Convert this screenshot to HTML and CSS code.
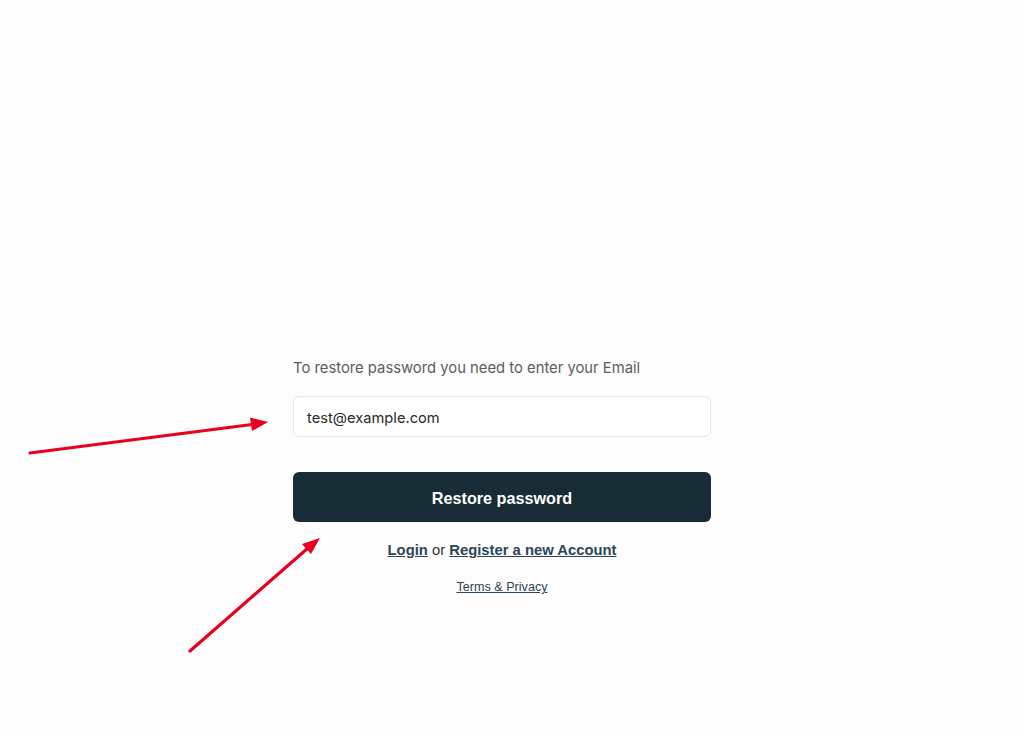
FILE: index.html
```html
<!DOCTYPE html>
<html lang="en">
<head>
<meta charset="utf-8">
<title>Restore password</title>
<link rel="stylesheet" href="styles.css">
</head>
<body>
<div class="page">
  <form class="card">
    <p class="hint">To restore password you need to enter your Email</p>
    <div class="input">test@example.com</div>
    <button type="button" class="btn">Restore password</button>
    <p class="links"><a href="#">Login</a> or <a href="#">Register a new Account</a></p>
    <p class="terms"><a href="#">Terms &amp; Privacy</a></p>
  </form>
</div>
<svg class="arrows" width="1024" height="736" viewBox="0 0 1024 736">
  <line x1="30" y1="453" x2="252" y2="424.5" stroke="#e8001c" stroke-width="3.2" stroke-linecap="round"/>
  <polygon points="268,422 250,417.5 252,431" fill="#e8001c"/>
  <line x1="190" y1="651" x2="308" y2="548" stroke="#e8001c" stroke-width="3.2" stroke-linecap="round"/>
  <polygon points="320,538 302,544 311,554" fill="#e8001c"/>
</svg>
</body>
</html>
```
FILE: styles.css
```css
html, body {
  margin: 0;
  padding: 0;
  background: #fdfdfd;
}
body {
  width: 1024px;
  height: 736px;
  overflow: hidden;
  position: relative;
}
.page {
  display: flex;
  justify-content: center;
  padding-right: 20px;
  padding-top: 358px;
}
.card {
  width: 418px;
  display: flex;
  flex-direction: column;
}
.hint {
  margin: 0;
  font-family: Inter, "Liberation Sans", sans-serif;
  font-size: 14.8px;
  line-height: 20px;
  color: #5c5c5c;
}
.input {
  margin-top: 18px;
  height: 41px;
  box-sizing: border-box;
  border: 1px solid #e4e6e8;
  border-radius: 6px;
  background: #fff;
  padding: 2px 13px 0;
  display: flex;
  align-items: center;
  font-family: Inter, "Liberation Sans", sans-serif;
  font-size: 14.7px;
  color: #2a2a2a;
}
.btn {
  margin-top: 35px;
  height: 50px;
  border: none;
  border-radius: 6px;
  background: #172c35;
  color: #fff;
  font-family: "Liberation Sans", Arial, sans-serif;
  font-weight: bold;
  font-size: 16.2px;
  padding: 2px 0 0;
}
.links {
  margin: 16px 0 0;
  text-align: center;
  font-family: "Liberation Sans", Arial, sans-serif;
  font-size: 14.8px;
  line-height: 24px;
  color: #333;
}
.links a {
  color: #2b4558;
  font-weight: bold;
  text-decoration: underline;
}
.terms {
  margin: 17px 0 0;
  text-align: center;
  font-family: "Liberation Sans", Arial, sans-serif;
  font-size: 12.6px;
  line-height: 16px;
}
.terms a {
  color: #2b4558;
  text-decoration: underline;
}
.arrows {
  position: absolute;
  left: 0;
  top: 0;
  pointer-events: none;
}
```
